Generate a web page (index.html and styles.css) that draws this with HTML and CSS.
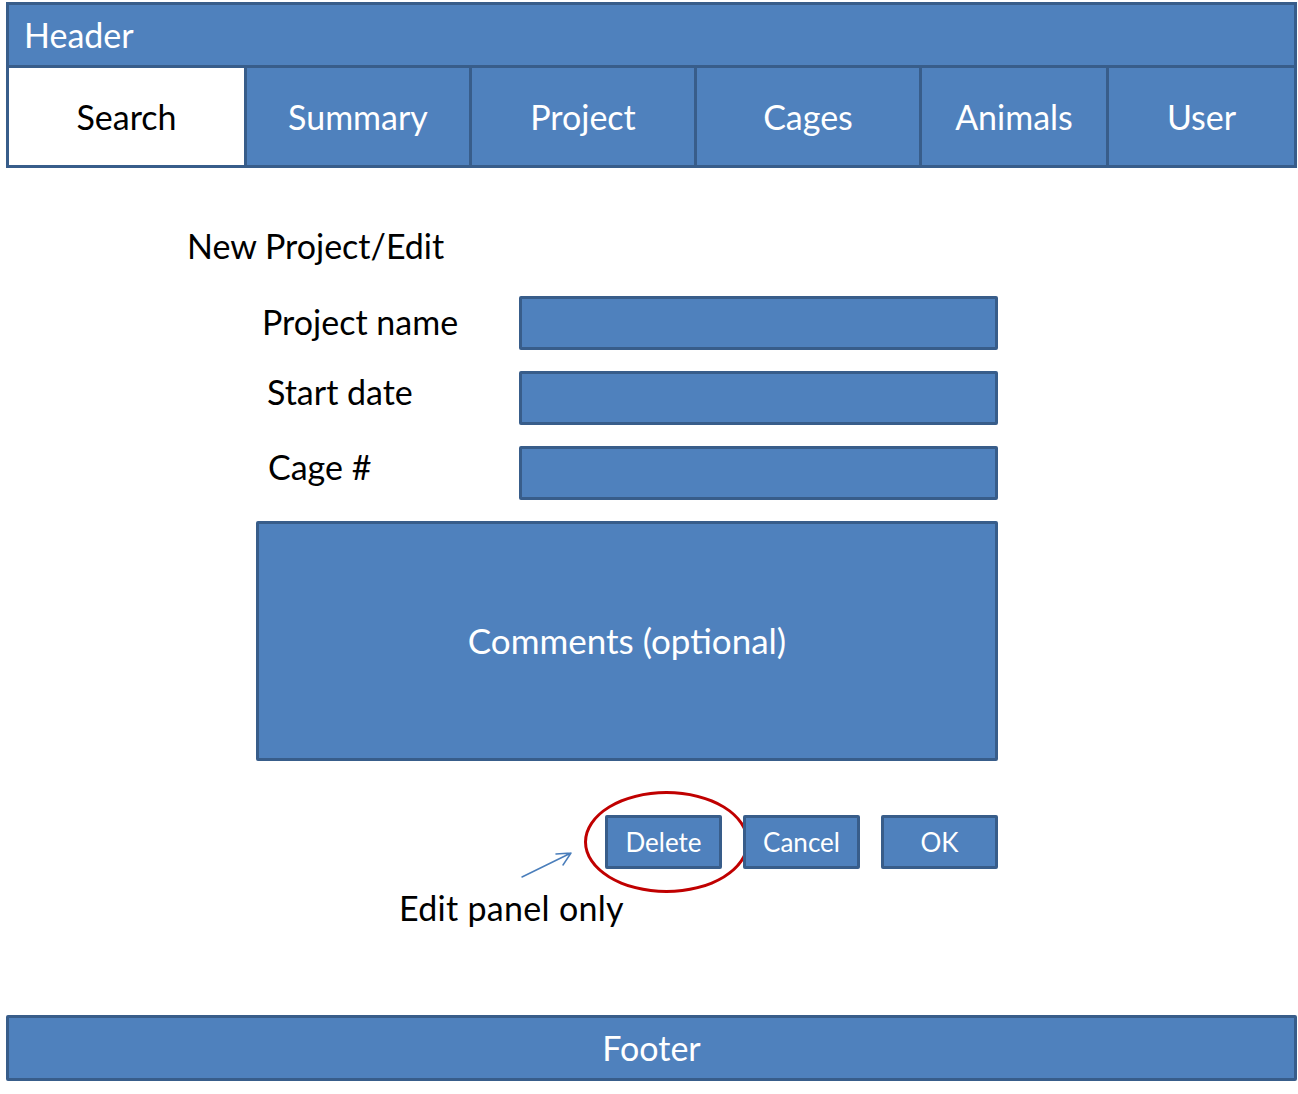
FILE: index.html
```html
<!DOCTYPE html>
<html lang="en">
<head>
<meta charset="utf-8">
<title>New Project/Edit</title>
<link rel="stylesheet" href="styles.css">
</head>
<body>
<div class="page">
  <header class="app-header">
    <div class="app-title">Header</div>
    <nav class="tabs">
      <div class="tab tab-search tab-active">Search</div>
      <div class="tab tab-wide">Summary</div>
      <div class="tab tab-wide">Project</div>
      <div class="tab tab-wide">Cages</div>
      <div class="tab tab-animals">Animals</div>
      <div class="tab tab-user">User</div>
    </nav>
  </header>

  <main class="content">
    <h1 class="form-title">New Project/Edit</h1>
    <div class="project-form">
      <div class="field">
        <span class="label label-name">Project name</span>
        <div class="input"></div>
      </div>
      <div class="field">
        <span class="label label-date">Start date</span>
        <div class="input"></div>
      </div>
      <div class="field">
        <span class="label label-cage">Cage #</span>
        <div class="input"></div>
      </div>
      <div class="comments">Comments (optional)</div>
      <div class="actions">
        <div class="btn btn-delete">Delete<span class="highlight"></span></div>
        <div class="btn">Cancel</div>
        <div class="btn">OK</div>
      </div>
    </div>
    <div class="annotation">
      <svg class="arrow" width="60" height="34" viewBox="0 0 60 34">
        <path d="M2 31 L51 7 M51 7 L36 8 M51 7 L43 19" fill="none" stroke="#4A7EBB" stroke-width="1.5" stroke-linecap="round" stroke-linejoin="round"/>
      </svg>
      Edit panel only
    </div>
  </main>

  <footer class="app-footer">Footer</footer>
</div>
</body>
</html>
```
FILE: styles.css
```css
* {
  box-sizing: border-box;
}

body {
  margin: 0;
  background: #ffffff;
  font-family: Lato, "Open Sans", sans-serif;
  color: #000000;
}

.page {
  width: 1298px;
  padding: 2px 1px 0 6px;
}

.app-header {
  border: 3px solid #385D8A;
  background: #4F81BD;
}

.app-title {
  height: 60px;
  line-height: 60px;
  padding-left: 15px;
  font-size: 34px;
  color: #ffffff;
}

.tabs {
  display: flex;
  border-top: 3px solid #385D8A;
  height: 100px;
}

.tab {
  display: flex;
  align-items: center;
  justify-content: center;
  border-right: 3px solid #385D8A;
  font-size: 34px;
  color: #ffffff;
  padding-bottom: 1px;
}

.tab-search {
  width: 238px;
}

.tab-wide {
  width: 225px;
}

.tab-animals {
  width: 187px;
}

.tab-user {
  flex: 1;
  border-right: none;
}

.tab-active {
  background: #ffffff;
  color: #000000;
}

.content {
  position: relative;
}

.form-title {
  margin: 58px 0 0 181px;
  font-size: 34px;
  line-height: 40px;
  font-weight: normal;
}

.project-form {
  width: 742px;
  margin: 30px 0 0 250px;
}

.field {
  display: grid;
  grid-template-columns: 263px 479px;
  align-items: center;
  height: 54px;
  margin-bottom: 21px;
}

.label {
  font-size: 34px;
  line-height: 40px;
}

.label-name {
  padding: 0 0 2px 6px;
}

.label-date {
  padding: 0 0 12px 11px;
}

.label-cage {
  padding: 0 0 12px 12px;
}

.input {
  height: 54px;
  border: 3px solid #385D8A;
  border-radius: 2px;
  background: #4F81BD;
}

.comments {
  height: 240px;
  border: 3px solid #385D8A;
  border-radius: 2px;
  background: #4F81BD;
  color: #ffffff;
  font-size: 35px;
  display: flex;
  align-items: center;
  justify-content: center;
  padding-bottom: 2px;
}

.actions {
  display: flex;
  justify-content: flex-end;
  gap: 21px;
  margin-top: 54px;
}

.btn {
  position: relative;
  width: 117px;
  height: 54px;
  border: 3px solid #385D8A;
  border-radius: 2px;
  background: #4F81BD;
  color: #ffffff;
  font-size: 26px;
  display: flex;
  align-items: center;
  justify-content: center;
  padding-bottom: 1px;
}

.btn-delete .highlight {
  position: absolute;
  left: -24px;
  top: -27px;
  width: 165px;
  height: 102px;
  border: 3px solid #C00000;
  border-radius: 50%;
}

.annotation {
  position: relative;
  margin: 19px 0 0 393px;
  font-size: 34px;
  line-height: 40px;
  letter-spacing: 0.3px;
}

.arrow {
  position: absolute;
  left: 121px;
  top: -42px;
}

.app-footer {
  margin-top: 87px;
  height: 66px;
  border: 3px solid #385D8A;
  border-radius: 2px;
  background: #4F81BD;
  color: #ffffff;
  font-size: 34px;
  display: flex;
  align-items: center;
  justify-content: center;
  padding-bottom: 2px;
}
```
